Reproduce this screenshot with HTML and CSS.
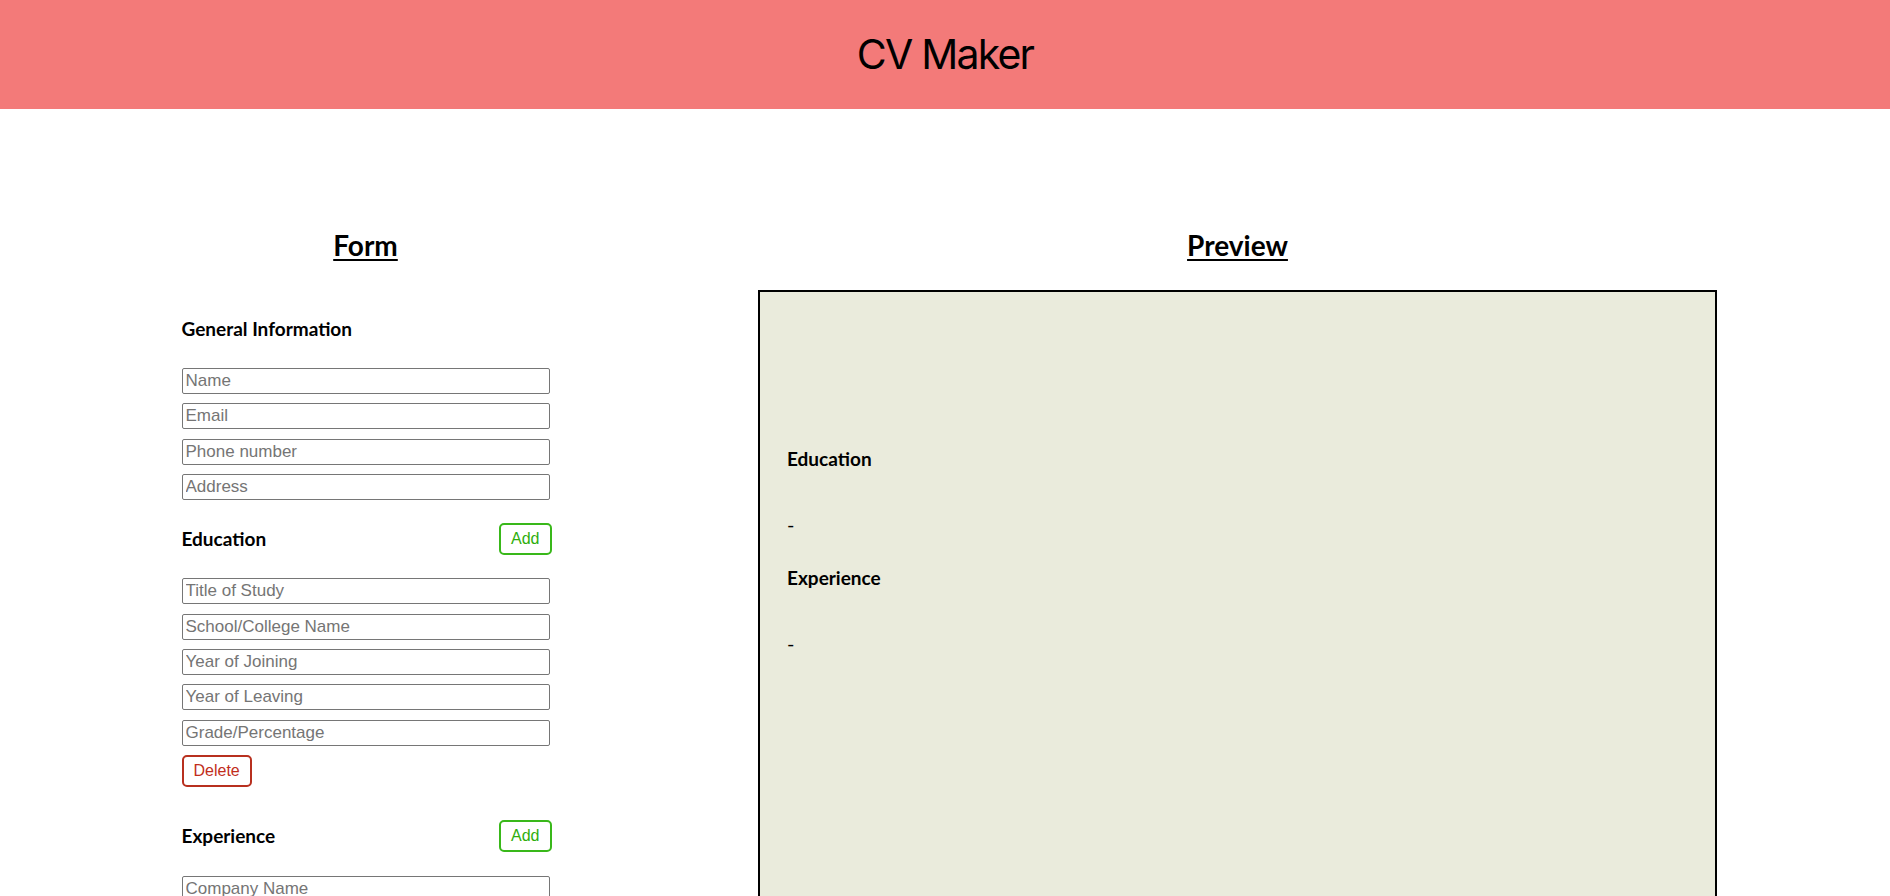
FILE: index.html
```html
<!DOCTYPE html>
<html lang="en">
<head>
<meta charset="utf-8">
<title>CV Maker</title>
<link rel="stylesheet" href="styles.css">
</head>
<body>
<header class="topbar">
  <h1 class="app-title">CV Maker</h1>
</header>
<main class="workspace">
  <section class="form-col">
    <h2 class="col-title">Form</h2>
    <div class="form-body">
      <div class="block general">
        <h3 class="block-title">General Information</h3>
        <div class="fields">
          <input class="field" type="text" placeholder="Name">
          <input class="field" type="email" placeholder="Email">
          <input class="field" type="text" placeholder="Phone number">
          <input class="field" type="text" placeholder="Address">
        </div>
      </div>
      <div class="block education">
        <div class="block-head">
          <h3 class="block-title">Education</h3>
          <button class="btn btn-add" type="button">Add</button>
        </div>
        <div class="fields">
          <input class="field" type="text" placeholder="Title of Study">
          <input class="field" type="text" placeholder="School/College Name">
          <input class="field" type="text" placeholder="Year of Joining">
          <input class="field" type="text" placeholder="Year of Leaving">
          <input class="field" type="text" placeholder="Grade/Percentage">
        </div>
        <button class="btn btn-delete" type="button">Delete</button>
      </div>
      <div class="block experience">
        <div class="block-head">
          <h3 class="block-title">Experience</h3>
          <button class="btn btn-add" type="button">Add</button>
        </div>
        <div class="fields">
          <input class="field" type="text" placeholder="Company Name">
          <input class="field" type="text" placeholder="Position Title">
          <input class="field" type="text" placeholder="Main Tasks">
          <input class="field" type="text" placeholder="Date From">
          <input class="field" type="text" placeholder="Date Until">
        </div>
        <button class="btn btn-delete" type="button">Delete</button>
      </div>
    </div>
  </section>
  <section class="preview-col">
    <h2 class="col-title">Preview</h2>
    <div class="sheet">
      <div class="sheet-block">
        <h3 class="sheet-title">Education</h3>
        <p class="sheet-line">-</p>
      </div>
      <div class="sheet-block">
        <h3 class="sheet-title">Experience</h3>
        <p class="sheet-line">-</p>
      </div>
    </div>
  </section>
</main>
</body>
</html>
```

FILE: styles.css
```css
html {
  scrollbar-width: none;
}

body {
  margin: 0;
  background: #ffffff;
  color: #000000;
  font-family: Lato, "Open Sans", sans-serif;
}

.topbar {
  height: 109px;
  background: #f37a79;
  display: flex;
  align-items: center;
  justify-content: center;
}

.app-title {
  margin: 0;
  font-family: Inter, "Noto Sans", sans-serif;
  font-weight: 400;
  font-size: 41px;
  letter-spacing: -1.8px;
  line-height: 1;
}

.workspace {
  display: grid;
  grid-template-columns: 731px 959px;
  column-gap: 27px;
  padding-top: 116px;
}

.col-title {
  margin: 0;
  font-size: 28px;
  line-height: 40px;
  font-weight: 700;
  text-align: center;
  text-decoration: underline;
  text-decoration-thickness: 2px;
  text-underline-offset: 3px;
}

.form-body {
  width: 368px;
  margin: 0 auto;
  display: flex;
  flex-direction: column;
}

.block-title {
  margin: 0;
  font-size: 19px;
  line-height: 24px;
  font-weight: 700;
}

.general .block-title {
  margin-top: 52px;
  margin-bottom: 27px;
}

.fields {
  display: flex;
  flex-direction: column;
  gap: 9.4px;
}

.field {
  box-sizing: border-box;
  width: 100%;
  height: 26px;
  margin: 0;
  padding: 1px 3px;
  border: 1px solid #767676;
  border-radius: 2px;
  font-family: Arial, "Liberation Sans", sans-serif;
  font-size: 17px;
  color: #000;
  background: #fff;
}

.field::placeholder {
  color: #757575;
}

.block-head {
  display: flex;
  align-items: center;
  justify-content: space-between;
  margin-bottom: 23px;
}

.education .block-head {
  margin-top: 23px;
}

.experience .block-head {
  margin-top: 33px;
  margin-bottom: 24px;
}

.btn {
  box-sizing: border-box;
  height: 32px;
  padding: 0 10px;
  border-width: 2px;
  border-style: solid;
  border-radius: 5px;
  background: #ffffff;
  font-family: Arial, "Liberation Sans", sans-serif;
  font-size: 16px;
  line-height: 28px;
}

.btn-add {
  color: #2fae0c;
  border-color: #39b81a;
  margin-right: -2px;
}

.btn-delete {
  align-self: flex-start;
  margin-top: 9px;
  color: #c12d1b;
  border-color: #b8301f;
}

.preview-col {
  display: flex;
  flex-direction: column;
}

.sheet {
  margin-top: 25px;
  min-height: 1100px;
  background: #eaebdc;
  border: 2px solid #000000;
  padding: 155px 27px 40px;
}

.sheet-title {
  margin: 0;
  font-size: 19px;
  line-height: 24px;
  font-weight: 700;
}

.sheet-line {
  margin: 43px 0 0;
  font-size: 20px;
  line-height: 20px;
}

.sheet-block + .sheet-block {
  margin-top: 32px;
}
```
